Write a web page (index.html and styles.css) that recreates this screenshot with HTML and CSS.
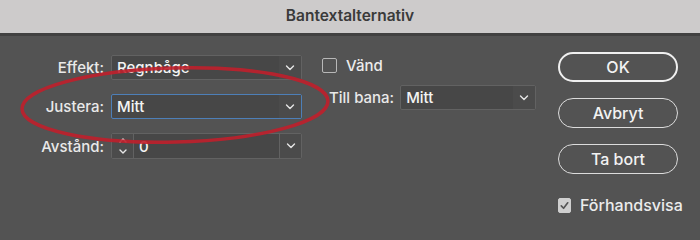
FILE: index.html
```html
<!DOCTYPE html>
<html lang="sv">
<head>
<meta charset="utf-8">
<title>Bantextalternativ</title>
<link rel="stylesheet" href="styles.css">
</head>
<body>
<div class="dialog">
  <header class="titlebar">Bantextalternativ</header>
  <main class="content">
    <section class="fields">
      <label class="lbl">Effekt:</label>
      <div class="select"><span class="val">Regnbåge</span><span class="chev"><svg viewBox="0 0 10 6" width="10" height="6"><polyline points="1.5,1 5,4.5 8.5,1"/></svg></span></div>

      <label class="lbl">Justera:</label>
      <div class="select focus"><span class="val">Mitt</span><span class="chev"><svg viewBox="0 0 10 6" width="10" height="6"><polyline points="1.5,1 5,4.5 8.5,1"/></svg></span></div>

      <label class="lbl">Avstånd:</label>
      <div class="combo">
        <span class="stepper"><svg viewBox="0 0 10 20" width="10" height="20"><polyline points="2,6 5,3 8,6"/><polyline points="2,14 5,17 8,14"/></svg></span>
        <span class="val">0</span>
        <span class="chev"><svg viewBox="0 0 10 6" width="10" height="6"><polyline points="1.5,1 5,4.5 8.5,1"/></svg></span>
      </div>
    </section>

    <section class="middle">
      <div class="check"><span class="box"></span><span>Vänd</span></div>
      <div class="path-row">
        <label class="lbl">Till bana:</label>
        <div class="select small"><span class="val">Mitt</span><span class="chev"><svg viewBox="0 0 10 6" width="10" height="6"><polyline points="1.5,1 5,4.5 8.5,1"/></svg></span></div>
      </div>
    </section>

    <section class="actions">
      <button class="btn default">OK</button>
      <button class="btn">Avbryt</button>
      <button class="btn">Ta bort</button>
      <div class="check preview"><span class="box checked"><svg viewBox="0 0 12 12" width="11" height="11"><polyline points="2.5,6.5 5,9 9.5,3"/></svg></span><span>Förhandsvisa</span></div>
    </section>
  </main>
  <svg class="annot" width="700" height="231" viewBox="0 0 700 231">
    <ellipse cx="175" cy="105" rx="153" ry="37" transform="rotate(-1.5 175 105)"/>
  </svg>
</div>
</body>
</html>
```

FILE: styles.css
```css
* { box-sizing: border-box; }
html, body { margin: 0; padding: 0; }
body {
  width: 700px;
  height: 231px;
  overflow: hidden;
  background: #535353;
  font-family: Inter, "Open Sans", "Liberation Sans", sans-serif;
  font-size: 15px;
  color: #ececec;
}
.dialog { position: relative; width: 700px; height: 231px; }
.titlebar {
  height: 36px;
  background: #cdcbcb;
  border-bottom: 3px solid #414141;
  color: #3a3a3a;
  font-weight: 600;
  font-size: 15.5px;
  display: flex;
  align-items: center;
  justify-content: center;
  padding-bottom: 3px;
}
.content {
  display: flex;
  align-items: flex-start;
  padding-top: 19px;
}
.fields {
  display: grid;
  grid-template-columns: 96px 191px;
  grid-template-rows: 25px 25px 26px;
  column-gap: 7px;
  row-gap: 14px;
  margin-left: 8px;
  align-items: center;
}
.lbl { text-align: right; color: #e9e9e9; font-weight: 500; }
.select, .combo {
  height: 25px;
  display: flex;
  align-items: stretch;
  background: #474747;
  border: 1px solid #626262;
  border-radius: 2px;
}
.combo { height: 26px; }
.select .val, .combo .val {
  flex: 1;
  display: flex;
  align-items: center;
  padding-left: 5px;
  color: #f4f4f4;
  font-weight: 500;
}
.chev {
  width: 22px;
  display: flex;
  align-items: center;
  justify-content: center;
  background: #4b4b4b;
}
.chev svg polyline, .stepper svg polyline {
  fill: none;
  stroke: #e6e6e6;
  stroke-width: 1.4;
  stroke-linecap: round;
  stroke-linejoin: round;
}
.select.focus { border-color: #4d7fb8; }
.combo .chev { border-left: 1px solid #626262; }
.stepper {
  width: 22px;
  display: flex;
  align-items: center;
  justify-content: center;
  background: #4b4b4b;
  border-right: 1px solid #626262;
}
.middle {
  margin-left: 20px;
  display: flex;
  flex-direction: column;
  gap: 10px;
  padding-top: 1px;
}
.check { display: flex; align-items: center; gap: 9px; color: #ececec; font-weight: 500; }
.box {
  width: 15px;
  height: 15px;
  border: 1.5px solid #b8b8b8;
  border-radius: 2px;
  display: flex;
  align-items: center;
  justify-content: center;
}
.box.checked { background: #cfcfcf; border-color: #cfcfcf; }
.box.checked svg polyline { fill: none; stroke: #555; stroke-width: 1.8; stroke-linecap: round; stroke-linejoin: round; }
.path-row { display: flex; align-items: center; gap: 6px; padding-left: 7px; }
.select.small { width: 136px; }
.actions {
  margin-left: auto;
  margin-right: 22px;
  width: 120px;
  display: flex;
  flex-direction: column;
  gap: 16px;
  margin-top: -3px;
}
.btn {
  height: 30px;
  border: 1.5px solid #dcdcdc;
  border-radius: 15px;
  background: #535353;
  color: #f2f2f2;
  font-family: inherit;
  font-size: 16px;
  font-weight: 500;
  padding: 0;
}
.btn.default { border-width: 2.5px; border-color: #f0f0f0; }
.preview { margin-top: 5px; gap: 9px; font-size: 16px; }
.annot { position: absolute; left: 0; top: 0; pointer-events: none; }
.annot ellipse { fill: none; stroke: #c01f2b; stroke-width: 3.5; opacity: 0.9; }
```
